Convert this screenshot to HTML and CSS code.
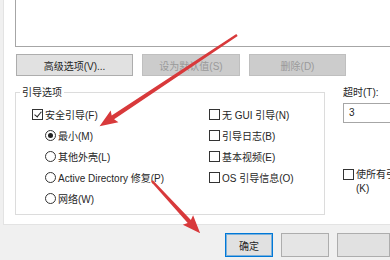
FILE: index.html
```html
<!DOCTYPE html>
<html lang="zh-CN">
<head>
    <meta charset="UTF-8">
    <title>系统配置 - 引导</title>
    <link rel="stylesheet" href="styles.css">
</head>
<body>

<div class="panel">
    <div class="list"></div>

    <div class="btn-row">
        <button class="btn btn-adv">高级选项(V)...</button>
        <button class="btn btn-default" disabled>设为默认值(S)</button>
        <button class="btn btn-del" disabled>删除(D)</button>
    </div>

    <div class="options">
        <fieldset class="group">
            <legend>引导选项</legend>
            <div class="cols">
                <div class="col">
                    <label class="opt"><span class="box checked"></span>安全引导(F)</label>
                    <label class="opt sub"><span class="radio checked"></span>最小(M)</label>
                    <label class="opt sub"><span class="radio"></span>其他外壳(L)</label>
                    <label class="opt sub"><span class="radio"></span>Active Directory 修复(P)</label>
                    <label class="opt sub"><span class="radio"></span>网络(W)</label>
                </div>
                <div class="col">
                    <label class="opt"><span class="box"></span>无 GUI 引导(N)</label>
                    <label class="opt"><span class="box"></span>引导日志(B)</label>
                    <label class="opt"><span class="box"></span>基本视频(E)</label>
                    <label class="opt"><span class="box"></span>OS 引导信息(O)</label>
                </div>
            </div>
        </fieldset>

        <div class="side">
            <div class="side-label">超时(T):</div>
            <div class="side-input">3</div>
            <div class="side-check">
                <span class="box"></span>
                <div class="side-text">
                    <div>使所有引导设置成为永久设置</div>
                    <div>(K)</div>
                </div>
            </div>
        </div>
    </div>
</div>

<div class="footer">
    <button class="btn btn-ok">确定</button>
    <button class="btn btn-cancel"></button>
    <button class="btn btn-apply"></button>
</div>

<!-- red annotation arrows -->
<svg class="arrows" width="390" height="260" viewBox="0 0 390 260">
    <polygon transform="translate(237,35) rotate(146.4)" points="0,-1.2 149,-2.2 147,-7 165,0 147,7 149,2.2 0,1.2"/>
    <polygon transform="translate(152,181) rotate(47.3)" points="0,-1.2 55,-2.2 53,-7 71,0 53,7 55,2.2 0,1.2"/>
</svg>

</body>
</html>
```

FILE: styles.css
```css
body {
    margin: 0;
    width: 390px;
    height: 260px;
    overflow: hidden;
    position: relative;
    background-color: #f0f0f0;
    font-family: "Liberation Sans", "Noto Sans CJK SC", sans-serif;
    font-size: 10px;
    color: #262626;
}
.panel {
    margin-left: 3px;
    width: 460px;
    height: 225px;
    box-sizing: border-box;
    padding-left: 11px;
    background-color: #fff;
    border-left: 1px solid #e3e3e3;
    border-bottom: 1px solid #e3e3e3;
}
.list {
    height: 47px;
    box-sizing: border-box;
    border-left: 1px solid #a6a6a6;
    border-bottom: 1px solid #a6a6a6;
}
.btn {
    font: inherit;
    height: 22px;
    box-sizing: border-box;
    padding: 0;
    background-color: #e1e1e1;
    border: 1px solid #adadad;
    color: #262626;
}
.btn:disabled {
    background-color: #cccccc;
    border-color: #bfbfbf;
    color: #9a9a9a;
}
.btn-row {
    display: flex;
    gap: 9px;
    margin-top: 7px;
    padding-left: 1px;
}
.btn-adv {
    width: 117px;
}
.btn-default {
    width: 98px;
}
.btn-del {
    width: 97px;
}
.options {
    display: flex;
    margin-top: 8px;
}
.group {
    margin: 0;
    padding: 0 0 5px 0;
    width: 332px;
    box-sizing: border-box;
    border: 1px solid #dcdcdc;
}
.group legend {
    margin-left: 4px;
    padding: 0 2px;
    line-height: 17px;
}
.cols {
    display: grid;
    grid-template-columns: 177px auto;
    padding: 3px 0 0 16px;
}
.opt {
    display: flex;
    align-items: center;
    gap: 2px;
    height: 21px;
    white-space: nowrap;
}
.opt.sub {
    padding-left: 13px;
}
.box,
.radio {
    width: 11px;
    height: 11px;
    box-sizing: border-box;
    border: 1px solid #333;
    background-color: #fff;
    position: relative;
    flex: none;
}
.radio {
    border-radius: 50%;
}
.box.checked::after {
    content: "";
    position: absolute;
    left: 3px;
    top: 0;
    width: 3px;
    height: 6px;
    border-right: 1.5px solid #222;
    border-bottom: 1.5px solid #222;
    transform: rotate(40deg);
}
.radio.checked::after {
    content: "";
    position: absolute;
    left: 2px;
    top: 2px;
    width: 5px;
    height: 5px;
    border-radius: 50%;
    background-color: #222;
}
.side {
    margin-left: 18px;
    width: 120px;
}
.side-label {
    line-height: 17px;
    white-space: nowrap;
}
.side-input {
    margin-top: 2px;
    height: 20px;
    box-sizing: border-box;
    border: 1px solid #a6a6a6;
    padding-left: 5px;
    line-height: 18px;
}
.side-check {
    display: flex;
    align-items: flex-start;
    gap: 2px;
    margin-top: 45px;
}
.side-check .box {
    margin-top: 1px;
}
.side-text {
    line-height: 14px;
    white-space: nowrap;
}
.footer {
    display: flex;
    gap: 8px;
    padding: 8px 0 0 225px;
}
.footer .btn {
    height: 24px;
}
.btn-ok {
    width: 68px;
    border-color: #0078d7;
    box-shadow: inset 0 0 0 1px rgba(0, 120, 215, 0.45);
}
.btn-cancel {
    width: 69px;
    background-color: #e5e5e5;
}
.btn-apply {
    width: 75px;
}
.arrows {
    position: absolute;
    left: 0;
    top: 0;
    pointer-events: none;
}
.arrows polygon {
    fill: #d8393b;
}
```
